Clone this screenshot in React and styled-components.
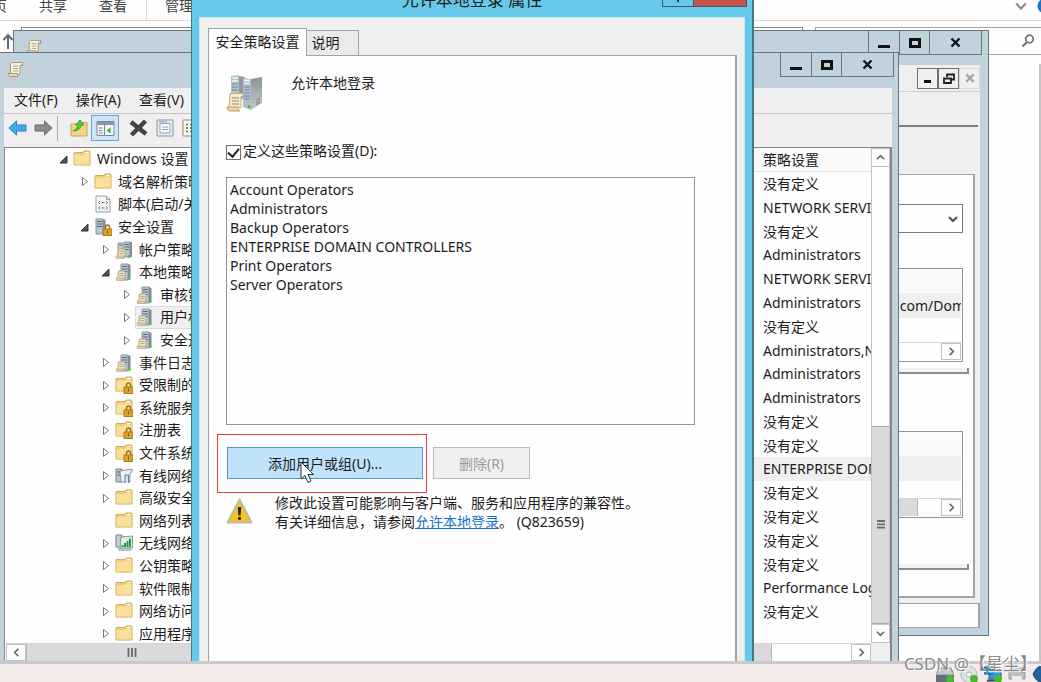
import React from 'react';
import styled, { createGlobalStyle } from 'styled-components';

const GlobalStyle = createGlobalStyle`
  * { box-sizing: border-box; }
  body { margin: 0; background: #fefefe; }
  body, button, input, select {
    font-family: "Noto Sans", "Noto Sans CJK SC", sans-serif;
    font-size: 14px;
    color: #1c1c1c;
  }
  button { padding: 0; border-radius: 0; }
  ul { list-style: none; margin: 0; padding: 0; }
`;

/* ---------- desktop ---------- */
const Desktop = styled.div`
  display: flex;
  flex-direction: column;
  height: 100vh;
  min-height: 660px;
  overflow: hidden;
  position: relative;
`;
const Stage = styled.main`
  flex: 1;
  min-height: 0;
  position: relative;
  overflow: hidden;
`;

/* ---------- file explorer behind the windows ---------- */
const Explorer = styled.section`
  display: flex;
  flex-direction: column;
  height: 100%;
`;
const Ribbon = styled.nav`
  display: flex;
  height: 21px;
  border-bottom: 1px solid #dcdcdc;
  overflow: hidden;
`;
const RibbonTab = styled.a`
  padding: 0 ${p => (p.$divided ? 18 : 16)}px;
  margin: -4px 0 0 ${p => (p.$divided ? 3 : p.$cut ? -37 : 0)}px;
  border-left: ${p => (p.$divided ? '1px solid #dcdcdc' : 0)};
  color: #444;
  line-height: 20px;
  text-decoration: none;
  white-space: nowrap;
`;
const RibbonEnd = styled.div`
  display: flex;
  gap: 10px;
  margin: 0 -12px 0 auto;
  flex: none;
`;
const AddressRow = styled.div`
  display: flex;
  gap: 12px;
  padding: 6px 0 0 2px;
  height: 34px;
`;
const AddressBox = styled.div`
  flex: 1;
  margin-left: -5px;
  border: 1px solid #8c8c8c;
`;
const SearchBox = styled.div`
  width: 226px;
  border: solid #a5a5a5;
  border-width: 1px 0 1px 1px;
  display: flex;
  justify-content: flex-end;
  align-items: center;
  padding-right: 6px;
`;
const ExplorerBody = styled.div`
  flex: 1;
  margin: 9px 0 0;
  border-right: 2px solid #c4c4c4;
`;

/* ---------- window frame ---------- */
const Window = styled.section`
  position: absolute;
  display: flex;
  flex-direction: column;
  background: #c1d2dc;
  border: 1px solid #65747e;
`;
const BackWindow = styled(Window)`
  left: 13px;
  right: 52px;
  top: 30px;
  bottom: 25px;
  padding: 0 8px 7px;
`;
const EditorWindow = styled(Window)`
  left: -1px;
  right: 142px;
  top: 52px;
  bottom: 0;
  padding: 0 6px 0 4px;
  border-bottom: 0;
`;
const TitleBar = styled.header`
  height: ${p => p.$h}px;
  flex: none;
  display: flex;
  justify-content: space-between;
  align-items: flex-start;
`;
const TitleIcon = styled.span`
  margin: 8px 0 0 ${p => p.$left}px;
  line-height: 0;
`;
const Controls = styled.div`
  display: flex;
  border: 1px solid #65747e;
  border-top: 0;
  margin-right: -2px;
`;
const ControlButton = styled.button`
  width: ${p => (p.$wide ? 52 : 30)}px;
  height: 23px;
  border: 0;
  border-left: ${p => (p.$first ? 0 : '1px solid #65747e')};
  background: #c1d2dc;
  display: grid;
  place-items: center;
`;

/* ---------- back window ---------- */
const Client = styled.div`
  flex: 1;
  min-height: 0;
  display: flex;
  flex-direction: column;
  background: #efefef;
`;
const MdiBar = styled.div`
  height: 27px;
  display: flex;
  justify-content: flex-end;
  align-items: center;
  border-bottom: 1px solid #cfcfcf;
`;
const MdiButton = styled.button`
  width: 21px;
  height: 21px;
  border: 1px solid ${p => (p.disabled ? '#dcdcdc' : '#707070')};
  background: #f0f0f0;
  display: grid;
  place-items: center;
`;
const BackToolbar = styled.div`
  height: 35px;
  margin-right: 2px;
  border-bottom: 2px solid #7d7d7d;
`;
const TabPage = styled.div`
  flex: 1;
  min-height: 0;
  margin: 47px 5px 5px 0;
  padding: 29px 10px 0;
  background: #fefefe;
  border: 1px solid #a3a3a8;
  border-right-width: 2px;
  border-bottom-width: 2px;
`;
const DomainSelect = styled.select`
  display: block;
  width: 100%;
  height: 29px;
  appearance: none;
  border: 1px solid #7a7a7a;
  border-radius: 0;
  background: transparent;
`;
const SelectWrap = styled.div`
  display: grid;
  align-items: center;
  background: #fefefe;
  > * { grid-area: 1 / 1; }
  > svg { justify-self: end; margin-right: 5px; }
`;
const MiniList = styled.div`
  margin-top: ${p => p.$top}px;
  height: ${p => p.$h}px;
  border: 1px solid #92929a;
  padding: 1px;
  display: flex;
  flex-direction: column;
`;
const MiniHead = styled.div`
  height: 23px;
  background: #fafafa;
`;
const MiniRow = styled.div`
  height: 25px;
  background: #efefef;
  display: flex;
  justify-content: flex-end;
  align-items: center;
  span { width: 65px; overflow: hidden; white-space: nowrap; }
`;
const GroupEdge = styled.div`
  margin: ${p => p.$top}px -6px 0 0;
  height: 6px;
  border: solid #8c8c8c;
  border-width: 0 2px 2px 0;
  background: #f3f3f3;
`;
const StatusBox = styled.div`
  height: 25px;
  background: #fefefe;
  border: 1px solid #a3a3a3;
  border-right-width: 2px;
`;

/* ---------- scroll bars ---------- */
const ScrollRow = styled.div`
  height: 18px;
  flex: none;
  display: flex;
  border-top: 1px solid #d5d5d5;
  background: #fdfdfd;
  margin-top: auto;
`;
const ScrollThumb = styled.div`
  flex: ${p => (p.$w ? 'none' : 1)};
  width: ${p => (p.$w ? p.$w + 'px' : 'auto')};
  background: ${p => (p.$track ? '#fdfdfd' : '#dadada')};
  border: 0 solid #b5b5b5;
  border-left-width: ${p => (p.$track ? 0 : 1)}px;
  border-right-width: ${p => (p.$track ? 0 : 1)}px;
  display: flex;
  align-items: center;
  justify-content: ${p => (p.$gripLeft ? 'flex-start' : 'center')};
  padding-left: ${p => (p.$gripLeft ? 100 : 0)}px;
`;
const ScrollButton = styled.button`
  width: 20px;
  height: ${p => (p.$tall ? 19 : 17)}px;
  flex: none;
  border: 1px solid #c3c3c3;
  background: #fdfdfd;
  display: grid;
  place-items: center;
`;
const VScrollWrap = styled.div`
  display: flex;
  padding-bottom: 18px;
`;
const VScroll = styled.div`
  width: 19px;
  display: flex;
  flex-direction: column;
  background: #fdfdfd;
  border: solid #c3c3c3;
  border-width: 0 1px;
  ${ScrollButton} { width: 17px; border-width: 1px 0; }
`;
const VTrack = styled.div`flex: ${p => p.$part};`;
const VThumb = styled.div`
  flex: ${p => p.$part};
  background: #dadada;
  border: solid #a9a9a9;
  border-width: 1px 0;
  display: grid;
  place-items: center;
`;

/* ---------- editor window ---------- */
const MenuBar = styled.nav`
  height: 26px;
  flex: none;
  display: flex;
  align-items: center;
  gap: 18px;
  padding: 0 0 2px 10px;
  border-bottom: 1px solid #c6c6c6;
`;
const MenuItem = styled.button`
  border: 0;
  background: none;
  line-height: 20px;
`;
const ToolBar = styled.div`
  height: 33px;
  flex: none;
  display: flex;
  align-items: center;
  padding: 0 0 5px 4px;
  gap: 7px;
`;
const ToolButton = styled.button`
  width: ${p => (p.$on ? 28 : 19)}px;
  height: 26px;
  border: ${p => (p.$on ? '1px solid #5fa8da' : '0')};
  background: ${p => (p.$on ? '#cfe4f7' : 'none')};
  margin: 0 ${p => (p.$on ? 3 : 0)}px 0 ${p => (p.$on ? -4 : 0)}px;
  display: grid;
  place-items: center;
`;
const ToolSeparator = styled.span`
  width: 1px;
  height: 25px;
  margin: 0 4px 0 -3px;
  background: #a9a9a9;
`;
const Panes = styled.div`
  flex: 1;
  min-height: 0;
  display: flex;
  border: solid #83868c;
  border-width: 1px 2px 0 1px;
`;
const TreePane = styled.div`
  flex: 1;
  min-width: 0;
  display: flex;
  flex-direction: column;
  background: #fefefe;
  padding-left: 1px;
`;
const Tree = styled.ul`
  flex: 1;
  min-height: 0;
  display: grid;
  grid-auto-rows: 1fr;
  margin-bottom: -2px;
`;
const TreeRow = styled.li`
  display: flex;
  align-items: center;
  min-height: 0;
  padding-left: ${p => 50 + p.$level * 21}px;
`;
const Expander = styled.span`
  width: 15px;
  flex: none;
  display: grid;
  place-items: center;
`;
const TreeNode = styled.span`
  display: flex;
  align-items: center;
  align-self: stretch;
  margin-left: 1px;
  padding: 0 4px 0 1px;
  gap: 6px;
  background: ${p => (p.$selected ? '#efefef' : 'none')};
  outline: ${p => (p.$selected ? '1px solid #dcdcdc' : 'none')};
  outline-offset: -1px;
  line-height: 20px;
  white-space: nowrap;
  svg { flex: none; }
`;
const ListPane = styled.div`
  width: 138px;
  flex: none;
  display: flex;
  background: #efefef;
`;
const ListMain = styled.div`
  flex: 1;
  min-width: 0;
  display: flex;
  flex-direction: column;
`;
const PolicyTable = styled.table`
  flex: 1;
  min-height: 0;
  display: flex;
  flex-direction: column;
  background: #fefefe;
  padding-bottom: 19px;
  thead, tr { display: block; }
  tbody { flex: 1; min-height: 0; display: grid; grid-auto-rows: 1fr; }
`;
const HeadCell = styled.th`
  display: block;
  height: 24px;
  padding: 1px 0 0 11px;
  background: #fafafa;
  border-bottom: 1px solid #e2e2e2;
  font-weight: 400;
  line-height: 22px;
  text-align: left;
`;
const PolicyRow = styled.tr`
  background: ${p => (p.$selected ? '#efefef' : 'none')};
  overflow: hidden;
`;
const PolicyCell = styled.td`
  display: block;
  padding: 0 0 0 11px;
  line-height: 23px;
  white-space: nowrap;
`;

/* ---------- property dialog ---------- */
const Dialog = styled.section`
  position: absolute;
  left: 191px;
  right: 287px;
  top: -19px;
  bottom: 0;
  display: flex;
  flex-direction: column;
  background: #66c9ea;
  border: 1px solid #41788c;
  border-width: 1px 2px 0 1px;
  padding: 0 7px;
`;
const DialogTitle = styled.header`
  height: 35px;
  flex: none;
  display: grid;
  align-items: start;
  > * { grid-area: 1 / 1; }
`;
const DialogHeading = styled.h1`
  margin: 5px 0 0;
  font-size: 17px;
  font-weight: 400;
  line-height: 26px;
  text-align: center;
`;
const DialogControls = styled.div`
  justify-self: end;
  display: flex;
  margin-right: -2px;
`;
const DialogControl = styled.button`
  width: ${p => (p.$close ? 53 : 32)}px;
  height: 25px;
  border: 1px solid #3d5a66;
  border-left-width: ${p => (p.$close ? 0 : 1)}px;
  background: ${p => (p.$close ? '#c4574d' : '#66c9ea')};
  display: grid;
  place-items: center;
`;
const DialogClient = styled.div`
  flex: 1;
  min-height: 0;
  display: flex;
  flex-direction: column;
  padding: 10px 7px 0 8px;
  background: #efefef;
  border: 1px solid #c4e8f4;
  border-bottom: 0;
`;
const TabStrip = styled.div`
  display: flex;
  align-items: flex-end;
`;
const Tab = styled.button`
  width: ${p => (p.$active ? 99 : 53)}px;
  height: ${p => (p.$active ? 28 : 25)}px;
  margin: 0 0 ${p => (p.$active ? -1 : 0)}px ${p => (p.$active ? 0 : -1)}px;
  padding: 0 ${p => (p.$active ? 0 : 14)}px 3px 0;
  border: 1px solid #a2a2aa;
  border-bottom: 0;
  background: ${p => (p.$active ? '#fefefe' : '#eaeaea')};
  position: relative;
  z-index: ${p => (p.$active ? 1 : 0)};
  white-space: nowrap;
`;
const DialogPage = styled.div`
  flex: 1;
  min-height: 0;
  background: #fefefe;
  border: 1px solid #a2a2aa;
  border-width: 1px 2px 0 1px;
  padding: 18px 40px 0 17px;
`;
const PolicyHeader = styled.div`
  display: flex;
  gap: 27px;
  height: 71px;
  line-height: 18px;
`;
const DefineLabel = styled.label`
  display: flex;
  align-items: flex-start;
  gap: 2px;
  height: 15px;
  line-height: 12px;
  white-space: nowrap;
`;
const CheckBox = styled.input`
  appearance: none;
  width: 15px;
  height: 15px;
  margin: 0;
  border: 1px solid #707070;
  background: #fefefe;
  display: grid;
  place-items: center;
  &:checked::before {
    content: "";
    width: 5px;
    height: 9px;
    margin-top: -2px;
    border: solid #1c1c1c;
    border-width: 0 2px 2px 0;
    transform: rotate(40deg);
  }
`;
const Members = styled.ul`
  height: 248px;
  margin-top: 17px;
  padding: 2px 3px;
  border: 1px solid #92929a;
  line-height: 19px;
`;
const Actions = styled.div`
  display: flex;
  gap: 10px;
  margin: 22px 0 0 1px;
`;
const Highlight = styled.div`
  position: relative;
  &::after {
    content: "";
    position: absolute;
    inset: -13px -4px -14px -10px;
    border: 1px solid #ee3a3a;
    pointer-events: none;
  }
`;
const Pointer = styled.span`
  position: absolute;
  left: 73px;
  top: 14px;
  line-height: 0;
  z-index: 1;
`;
const ActionButton = styled.button`
  width: ${p => (p.$primary ? 196 : 97)}px;
  height: 32px;
  border: 1px solid ${p => (p.$primary ? '#5c93b8' : '#bcbcbc')};
  background: ${p => (p.$primary ? '#bee3fb' : '#f0f0f0')};
  color: ${p => (p.$primary ? '#1c1c1c' : '#9a9a9a')};
`;
const Notice = styled.div`
  display: flex;
  gap: 22px;
  margin-top: 14px;
  p { margin: 0; line-height: 19px; white-space: nowrap; }
  a { color: #1a6fd0; }
  svg { margin-top: 5px; flex: none; }
`;

/* ---------- task bar ---------- */
const TaskBar = styled.footer`
  height: 21px;
  flex: none;
  display: flex;
  justify-content: flex-end;
  gap: 6px;
  border-top: 3px solid #c9c9c9;
  background: #f2ebe9;
  padding-top: 2px;
  overflow: hidden;
  svg { flex: none; }
  svg:last-child { margin-right: -9px; }
`;
const Watermark = styled.span`
  position: absolute;
  right: 4px;
  bottom: 6px;
  font-size: 17px;
  line-height: 24px;
  color: #8a8a8a;
  text-shadow: 1px 1px 0 #fff;
  white-space: nowrap;
`;

/* ---------- drawings ---------- */
const Minimize = ({ w = 12 }) => (
  <svg width={w} height="12" viewBox={`0 0 ${w} 12`}><path d={`M0 9.500H${w}`} stroke="#111" strokeWidth="3" /></svg>
);
const Maximize = () => (
  <svg width="12" height="10" viewBox="0 0 12 10"><path d="M1.500 1.500h9v7h-9z" fill="none" stroke="#111" strokeWidth="3" /></svg>
);
const Cross = ({ color = '#111', size = 11 }) => (
  <svg width={size} height={size} viewBox="0 0 11 11"><path d="M1.500 1.500l8 8M9.500 1.500l-8 8" stroke={color} strokeWidth="2.400" /></svg>
);
const Restore = () => (
  <svg width="12" height="11" viewBox="0 0 12 11"><path d="M4 4V1.500h7v5H8.500M1 5.500h7v4.500H1z" fill="none" stroke="#222" strokeWidth="1.800" /></svg>
);
const arrows = { left: 'M7 1L3 5l4 4', right: 'M3 1l4 4-4 4', up: 'M1 7l4-4 4 4', down: 'M1 3l4 4 4-4' };
const Arrow = ({ dir, color = '#666', size = 9, weight = 1.8 }) => (
  <svg width={size} height={size} viewBox="0 0 10 10"><path d={arrows[dir]} fill="none" stroke={color} strokeWidth={weight} /></svg>
);
const Grip = ({ vertical }) => (
  <svg width="10" height="9" viewBox="0 0 10 9">
    <path d={vertical ? 'M1 1h8M1 4.300h8M1 7.600h8' : 'M1.500 0v9M5 0v9M8.500 0v9'} stroke="#6a6a6a" strokeWidth="1.800" />
  </svg>
);
const Scroll = ({ size = 17 }) => (
  <svg width={size} height={size} viewBox="0 0 17 17">
    <path d="M5 1.500h10.500v3H13v9H3.500V3z" fill="#fbf3d9" stroke="#a8997a" />
    <path d="M1 12.500h9.500v3H2.500Q1 15 1 12.500z" fill="#ecd9ab" stroke="#a8997a" />
    <path d="M13 4.500h2.500V2" fill="#e2cf9f" stroke="#a8997a" />
    <path d="M6 5h5M6 7.500h5M6 10h5" stroke="#9aa3ac" />
  </svg>
);
const folderShape = (
  <g>
    <path d="M1 3.500Q1 2.500 2 2.500h8l1-1.500h5q1 0 1 1v13H1z" fill="#f0cd78" stroke="#d2a95a" />
    <path d="M1.500 5h8.500l1.500-1.500H16.500V14.500h-15z" fill="#fbe09a" />
    <path d="M12 2.500h3.500" stroke="#fff" />
  </g>
);
const lockShape = (
  <g>
    <path d="M11.500 11V9.500q0-2.500 2-2.500t2 2.500V11" fill="none" stroke="#9b7420" strokeWidth="1.500" />
    <path d="M9 11h9v6.500H9z" fill="#dca423" stroke="#a97a14" />
    <path d="M13.500 12.500v3" stroke="#7d5908" />
  </g>
);
const towerShape = (
  <g>
    <path d="M6 1h7v16H6z" fill="#b9c8d1" stroke="#8b979f" />
    <path d="M13 1l2.500 1v14L13 17z" fill="#7f8b93" />
    <path d="M7 3.500h5M7 6h5M7 8.500h5" stroke="#4d6579" />
  </g>
);
const noteShape = (
  <g>
    <path d="M3.500 8h6.500v8H2.500z" fill="#efe3c6" stroke="#b3a587" />
    <path d="M1 15h8v2.500H1.500z" fill="#dcc998" stroke="#b3a587" strokeWidth=".6" />
    <path d="M4.500 10.500h4M4.500 12.500h4" stroke="#b0a88f" />
    <circle cx="14" cy="15.500" r="1.500" fill="#4cc23e" />
  </g>
);
const TreeIcon = ({ kind }) => (
  <svg width="18" height="18" viewBox="0 0 18 18">
    {(kind === 'folder' || kind === 'locked') && folderShape}
    {kind === 'locked' && lockShape}
    {kind === 'script' && (
      <g>
        <path d="M2 1h10.500L16 4.500V17H2z" fill="#f5f6f7" stroke="#9aa0a6" />
        <path d="M12.500 1v3.500H16" fill="none" stroke="#9aa0a6" />
        <path d="M6 6L4.500 7.500 6 9M12 6l1.500 1.500L12 9M7.500 7.500h3M6 11.500L4.500 13 6 14.500M12 11.500l1.500 1.500-1.500 1.500M7.500 13h3" fill="none" stroke="#667078" />
      </g>
    )}
    {kind === 'security' && (
      <g>
        <path d="M2 1h7v15H2z" fill="#b9c8d1" stroke="#8b979f" />
        <path d="M9 1l2.500 1v13L9 16z" fill="#7f8b93" />
        <path d="M3 3.500h5M3 6h5M3 8.500h5" stroke="#4d6579" />
        {lockShape}
      </g>
    )}
    {kind === 'servers' && (
      <g>
        <path d="M3 2h5v12H3z" fill="#c0cdd5" stroke="#8b979f" />
        <path d="M9 1h6v15H9z" fill="#b9c8d1" stroke="#8b979f" />
        <path d="M15 1h2v15h-2z" fill="#7f8b93" />
        <path d="M4 4h3M10 3.500h4M10 6h4M10 8.500h4" stroke="#4d6579" />
        {noteShape}
      </g>
    )}
    {kind === 'server' && <g>{towerShape}{noteShape}</g>}
    {kind === 'wired' && (
      <g>
        <path d="M1 2h6v13H1z" fill="#b7c6cf" stroke="#75828b" />
        <path d="M5 4l12-2v3l-2 1v9H6z" fill="#eef0ee" stroke="#8b949a" />
        <path d="M2 5h3M2 8h3" stroke="#4d6579" />
        <path d="M10 16V8h3.500v8" fill="#cde4f5" stroke="#4e83ad" />
      </g>
    )}
    {kind === 'wireless' && (
      <g>
        <path d="M1 1h6v12H1z" fill="#c3ced5" stroke="#75828b" />
        <path d="M6 3l11.500-1v12H5z" fill="#e5efe3" stroke="#8b949a" />
        <path d="M7.500 13v-2M10 13V9M12.500 13V7M15 13V4.500" stroke="#1f9b4a" strokeWidth="2" />
        <path d="M3 14.500h13v2H4z" fill="#c9d0c5" stroke="#8b949a" strokeWidth=".6" />
      </g>
    )}
  </svg>
);
const ToolArrow = ({ forward }) => (
  <svg width="19" height="16" viewBox="0 0 19 16">
    <path d={forward ? 'M18 8L10.500 1v4H1v6h9.500v4z' : 'M1 8l7.500-7v4H18v6H8.500v4z'}
      fill={forward ? '#8b8b8b' : '#3fa9ea'} stroke={forward ? '#6c6c6c' : '#2a7fc4'} />
  </svg>
);
const FolderUp = () => (
  <svg width="18" height="18" viewBox="0 0 18 18">
    <path d="M1 5h9l1-1.500h6V17H1z" fill="#f3d588" stroke="#c9a257" />
    <path d="M3 12q4-1 5-6H5.500L10 1l4 5h-2.500Q10 12 3 12z" fill="#4fc934" stroke="#2e9a1e" strokeWidth=".8" />
  </svg>
);
const DeleteIcon = () => (
  <svg width="19" height="18" viewBox="0 0 19 18">
    <path d="M2 3l15 12M16.500 2L2.500 16" stroke="#444" strokeWidth="4.500" />
  </svg>
);
const PaneIcon = () => (
  <svg width="19" height="17" viewBox="0 0 19 17">
    <path d="M1 1.500h17v14H1z" fill="#f4f6f8" stroke="#7e8b97" />
    <path d="M1 2h17v3H1z" fill="#8797a5" />
    <path d="M8.500 5v10.500" stroke="#7e8b97" />
    <path d="M3 8h3.500M3 10.500h3.500M3 13h3.500" stroke="#5b8fc0" />
    <path d="M14.500 7.500v6L10.500 10.500z" fill="#37b22a" />
  </svg>
);
const PropertiesIcon = () => (
  <svg width="18" height="18" viewBox="0 0 18 18">
    <path d="M1 1h16v16H1z" fill="#e9edf0" stroke="#8b979f" />
    <path d="M4 4.500h10v9.500H4z" fill="#fbfcfd" stroke="#8ba6bf" />
    <path d="M6 8h6M6 10.500h6M3 2.800h8" stroke="#7fa4c6" />
  </svg>
);
const ListIcon = () => (
  <svg width="18" height="18" viewBox="0 0 18 18">
    <path d="M1 1h16v16H1z" fill="#fdfae6" stroke="#8b8b7f" />
    <path d="M4 5.500h2M4 9h2M4 12.500h2M8 5.500h6M8 9h6M8 12.500h6" stroke="#666" strokeWidth="1.500" />
  </svg>
);
const PolicyServers = () => (
  <svg width="38" height="38" viewBox="0 0 38 38">
    <defs>
      <linearGradient id="side" x1="0" y1="0" x2="0" y2="1">
        <stop offset="0" stopColor="#8b9496" />
        <stop offset="1" stopColor="#c3c9ca" />
      </linearGradient>
    </defs>
    <path d="M13 2l6 1v20l-6 4z" fill="#8f9a9f" />
    <path d="M5 2l8-1v25H5z" fill="#b3c3ce" />
    <path d="M17 4l8 1v31l-8-3z" fill="#aebfca" />
    <path d="M25 5l11-2v26l-11 7z" fill="url(#side)" />
    <path d="M6 4h6M6 7h6M18 6.500h6M18 9.500h6" stroke="#eef5fa" strokeWidth="1.500" />
    <path d="M6 10h6M6 13h6M6 16h6M18 13h6M18 16h6M18 19h6M18 22h6M18 25h6" stroke="#7189a0" />
    <path d="M30 29l4-2.500M30 26.500l4-2.500M30 31l4-2.500" stroke="#7b8486" />
    <path d="M4 19.500h13v3h-2v11H3z" fill="#f6ebcb" stroke="#c2ae7c" />
    <path d="M1 33h11q0 3 2 4H3q-2-1-2-4z" fill="#e7d4a0" stroke="#b8a26c" />
    <path d="M6 24h7M6 27h7M6 30h7" stroke="#8d8878" />
    <circle cx="23" cy="32.500" r="1.500" fill="#4cc23e" />
  </svg>
);
const Warning = () => (
  <svg width="27" height="26" viewBox="0 0 27 26">
    <path d="M13.500 1.500L25.500 24.500h-24z" fill="#f3c51d" stroke="#b9b9ae" strokeWidth="2" strokeLinejoin="round" />
    <path d="M11.800 9h3.400l-.6 8.500h-2.200z" fill="#222" />
    <path d="M13.500 19v2.800" stroke="#222" strokeWidth="2.800" />
  </svg>
);
const CursorIcon = () => (
  <svg width="15" height="23" viewBox="0 0 15 23">
    <path d="M1 1v17l4-3.500 3 7 3-1.500-3-6.500h5.500z" fill="#fff" stroke="#333" />
  </svg>
);
const TrayIcon = ({ kind }) => (
  <svg width="18" height="18" viewBox="0 0 18 18">
    {kind === 'disk' && <g><path d="M3 2h12l3 7H0z" fill="#c3c8cc" stroke="#8f979c" /><path d="M0 9h18v8H0z" fill="#63707b" /></g>}
    {kind === 'disc' && <g><circle cx="9" cy="8.500" r="8" fill="#dfe3e8" stroke="#a9b0b7" /><circle cx="9" cy="8.500" r="2.500" fill="#fff" stroke="#a9b0b7" /></g>}
    {kind === 'network' && <g><path d="M0 1h9v7H0zM5 4h12v9H5z" fill="#2c9be0" stroke="#2c5f8c" /><path d="M3 14.500h12" stroke="#345" strokeWidth="2" /></g>}
    {kind === 'printer' && <g><path d="M4 2h10v5H4z" fill="#e4e4e4" stroke="#aaa" /><path d="M1 6h16v7H1z" fill="#bdbdbd" stroke="#999" /><path d="M4 10h10v4H4z" fill="#eee" /></g>}
    {kind === 'sound' && <path d="M1 8q5-10 10-7v14Q5 18 1 8z" fill="#23629c" stroke="#174870" />}
    {kind !== 'printer' && kind !== 'sound' && <circle cx="14" cy="13" r="4" fill="#4bb82f" />}
  </svg>
);

/* ---------- data ---------- */
const treeItems = [
  [0, 'open', 'folder', 'Windows 设置'],
  [1, 'closed', 'folder', '域名解析策略'],
  [1, '', 'script', '脚本(启动/关机)'],
  [1, 'open', 'security', '安全设置'],
  [2, 'closed', 'servers', '帐户策略'],
  [2, 'open', 'server', '本地策略'],
  [3, 'closed', 'server', '审核策略'],
  [3, 'closed', 'server', '用户权限分配', true],
  [3, 'closed', 'server', '安全选项'],
  [2, 'closed', 'server', '事件日志'],
  [2, 'closed', 'locked', '受限制的组'],
  [2, 'closed', 'locked', '系统服务'],
  [2, 'closed', 'locked', '注册表'],
  [2, 'closed', 'locked', '文件系统'],
  [2, 'closed', 'wired', '有线网络策略'],
  [2, 'closed', 'folder', '高级安全'],
  [2, '', 'folder', '网络列表'],
  [2, 'closed', 'wireless', '无线网络'],
  [2, 'closed', 'folder', '公钥策略'],
  [2, 'closed', 'folder', '软件限制策略'],
  [2, 'closed', 'folder', '网络访问保护'],
  [2, 'closed', 'folder', '应用程序控制'],
];
const none = '没有定义';
const policies = [
  none, 'NETWORK SERVICE', none, 'Administrators', 'NETWORK SERVICE', 'Administrators', none,
  'Administrators,NT', 'Administrators', 'Administrators', none, none, 'ENTERPRISE DOMAIN',
  none, none, none, none, 'Performance Log', none,
];
const members = [
  'Account Operators', 'Administrators', 'Backup Operators',
  'ENTERPRISE DOMAIN CONTROLLERS', 'Print Operators', 'Server Operators',
];

const WindowControls = () => (
  <Controls>
    <ControlButton $first aria-label="最小化"><Minimize /></ControlButton>
    <ControlButton aria-label="最大化"><Maximize /></ControlButton>
    <ControlButton $wide aria-label="关闭"><Cross /></ControlButton>
  </Controls>
);

const ExplorerView = () => (
  <Explorer>
    <Ribbon>
      <RibbonTab href="#home" $cut>主页</RibbonTab>
      <RibbonTab href="#share">共享</RibbonTab>
      <RibbonTab href="#view">查看</RibbonTab>
      <RibbonTab href="#manage" $divided>管理</RibbonTab>
      <RibbonEnd>
        <Arrow dir="down" size={12} color="#888" />
        <svg width="16" height="14" viewBox="0 0 16 14"><circle cx="8" cy="6" r="7.500" fill="#1a73c9" /></svg>
      </RibbonEnd>
    </Ribbon>
    <AddressRow>
      <svg width="12" height="24" viewBox="0 0 12 24"><path d="M6 22V8M1.500 13L6 8l4.500 5" fill="none" stroke="#666" strokeWidth="2" /></svg>
      <AddressBox />
      <SearchBox>
        <svg width="14" height="14" viewBox="0 0 14 14"><circle cx="8.500" cy="5" r="3.800" fill="none" stroke="#777" strokeWidth="1.800" /><path d="M6 8l-4.500 4.500" stroke="#777" strokeWidth="2.200" /></svg>
      </SearchBox>
    </AddressRow>
    <ExplorerBody />
  </Explorer>
);

const ManagementWindow = () => (
  <BackWindow>
    <TitleBar $h={34}>
      <TitleIcon $left={4}><Scroll size={16} /></TitleIcon>
      <WindowControls />
    </TitleBar>
    <Client>
      <MdiBar>
        <MdiButton aria-label="最小化子窗口"><Minimize w={7} /></MdiButton>
        <MdiButton aria-label="还原子窗口"><Restore /></MdiButton>
        <MdiButton disabled aria-label="关闭子窗口"><Cross color="#9aa5ad" size={10} /></MdiButton>
      </MdiBar>
      <BackToolbar />
      <TabPage>
        <SelectWrap>
          <DomainSelect aria-label="显示链接的位置"><option></option></DomainSelect>
          <Arrow dir="down" color="#555" weight={2.2} size={10} />
        </SelectWrap>
        <MiniList $top={35} $h={94}>
          <MiniHead />
          <MiniRow><span>.com/Domain</span></MiniRow>
          <ScrollRow>
            <ScrollThumb $track />
            <ScrollButton aria-label="向右滚动"><Arrow dir="right" /></ScrollButton>
          </ScrollRow>
        </MiniList>
        <GroupEdge $top={6} />
        <MiniList $top={57} $h={87}>
          <MiniHead />
          <MiniRow />
          <ScrollRow>
            <ScrollThumb />
            <ScrollThumb $track $w={23} />
            <ScrollButton aria-label="向右滚动"><Arrow dir="right" /></ScrollButton>
          </ScrollRow>
        </MiniList>
        <GroupEdge $top={46} />
      </TabPage>
      <StatusBox />
    </Client>
  </BackWindow>
);

const PolicyEditor = () => (
  <EditorWindow>
    <TitleBar $h={35}>
      <TitleIcon $left={3}><Scroll /></TitleIcon>
      <WindowControls />
    </TitleBar>
    <Client>
      <MenuBar>
        <MenuItem>文件(F)</MenuItem>
        <MenuItem>操作(A)</MenuItem>
        <MenuItem>查看(V)</MenuItem>
      </MenuBar>
      <ToolBar>
        <ToolButton aria-label="后退"><ToolArrow /></ToolButton>
        <ToolButton aria-label="前进"><ToolArrow forward /></ToolButton>
        <ToolSeparator />
        <ToolButton aria-label="上一级"><FolderUp /></ToolButton>
        <ToolButton $on aria-label="显示控制台树"><PaneIcon /></ToolButton>
        <ToolButton aria-label="删除"><DeleteIcon /></ToolButton>
        <ToolButton aria-label="属性"><PropertiesIcon /></ToolButton>
        <ToolButton aria-label="导出列表"><ListIcon /></ToolButton>
      </ToolBar>
      <Panes>
        <TreePane>
          <Tree>
            {treeItems.map(([level, state, icon, label, selected]) => (
              <TreeRow key={label} $level={level}>
                <Expander>
                  {state === 'closed' && <svg width="8" height="11" viewBox="0 0 8 11"><path d="M1.500 1.500v8l5-4z" fill="#fff" stroke="#777" /></svg>}
                  {state === 'open' && <svg width="9" height="9" viewBox="0 0 9 9"><path d="M8 1v7H1z" fill="#555" stroke="#333" /></svg>}
                </Expander>
                <TreeNode $selected={selected}><TreeIcon kind={icon} />{label}</TreeNode>
              </TreeRow>
            ))}
          </Tree>
          <ScrollRow>
            <ScrollButton aria-label="向左滚动"><Arrow dir="left" /></ScrollButton>
            <ScrollThumb $gripLeft><Grip /></ScrollThumb>
          </ScrollRow>
        </TreePane>
        <ListPane>
          <ListMain>
            <PolicyTable>
              <thead><tr><HeadCell>策略设置</HeadCell></tr></thead>
              <tbody>
                {policies.map((text, i) => (
                  <PolicyRow key={i} $selected={i === 12}><PolicyCell>{text}</PolicyCell></PolicyRow>
                ))}
              </tbody>
            </PolicyTable>
            <ScrollRow>
              <ScrollThumb $w={20} />
              <ScrollThumb $track />
              <ScrollButton aria-label="向右滚动"><Arrow dir="right" /></ScrollButton>
            </ScrollRow>
          </ListMain>
          <VScrollWrap>
            <VScroll>
              <ScrollButton $tall aria-label="向上滚动"><Arrow dir="up" /></ScrollButton>
              <VTrack $part={260} />
              <VThumb $part={197}><Grip vertical /></VThumb>
              <ScrollButton $tall aria-label="向下滚动"><Arrow dir="down" /></ScrollButton>
            </VScroll>
          </VScrollWrap>
        </ListPane>
      </Panes>
    </Client>
  </EditorWindow>
);

const PropertyDialog = () => (
  <Dialog role="dialog" aria-labelledby="dialog-title">
    <DialogTitle>
      <DialogHeading id="dialog-title">允许本地登录 属性</DialogHeading>
      <DialogControls>
        <DialogControl aria-label="帮助"><svg width="8" height="14" viewBox="0 0 8 14"><path d="M1.500 4q0-3 2.500-3t2.500 2.500Q6.500 5 4 6.500V9M4 11.500V14" fill="none" stroke="#222" strokeWidth="2" /></svg></DialogControl>
        <DialogControl $close aria-label="关闭"><Cross color="#5a2420" size={13} /></DialogControl>
      </DialogControls>
    </DialogTitle>
    <DialogClient>
      <TabStrip role="tablist">
        <Tab $active role="tab" aria-selected="true">安全策略设置</Tab>
        <Tab role="tab" aria-selected="false">说明</Tab>
      </TabStrip>
      <DialogPage>
        <PolicyHeader>
          <PolicyServers />
          <span>允许本地登录</span>
        </PolicyHeader>
        <DefineLabel><CheckBox type="checkbox" defaultChecked />定义这些策略设置(D):</DefineLabel>
        <Members>{members.map(m => <li key={m}>{m}</li>)}</Members>
        <Actions>
          <Highlight>
            <ActionButton $primary>添加用户或组(U)...</ActionButton>
            <Pointer><CursorIcon /></Pointer>
          </Highlight>
          <ActionButton disabled>删除(R)</ActionButton>
        </Actions>
        <Notice>
          <Warning />
          <p>修改此设置可能影响与客户端、服务和应用程序的兼容性。<br />有关详细信息，请参阅<a href="#help">允许本地登录</a>。 (Q823659)</p>
        </Notice>
      </DialogPage>
    </DialogClient>
  </Dialog>
);

export default function App() {
  return (
    <Desktop>
      <GlobalStyle />
      <Stage>
        <ExplorerView />
        <ManagementWindow />
        <PolicyEditor />
        <PropertyDialog />
      </Stage>
      <TaskBar>
        {['disk', 'disc', 'network', 'printer', 'sound'].map(k => <TrayIcon key={k} kind={k} />)}
      </TaskBar>
      <Watermark>CSDN @【星尘】</Watermark>
    </Desktop>
  );
}
